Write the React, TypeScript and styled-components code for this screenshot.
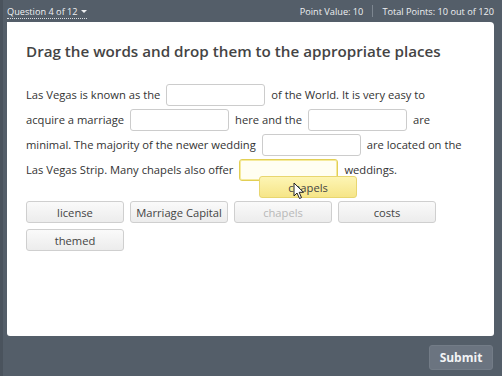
import React from "react";
import styled, { createGlobalStyle } from "styled-components";

const Global = createGlobalStyle`
  html, body { margin: 0; padding: 0; }
  body { background: #545e69; font-family: "Open Sans", "Liberation Sans", sans-serif; }
  * { box-sizing: border-box; }
`;

const Frame = styled.div`
  width: 502px;
  height: 376px;
  background: #545e69;
  border-left: 3px solid #4a535d;
  padding: 0 8px 0 4px;
  display: flex;
  flex-direction: column;
`;

const TopBar = styled.div`
  height: 22px;
  display: flex;
  align-items: center;
  justify-content: space-between;
  color: #eef0f2;
  font-size: 9.2px;
`;

const QuestionMenu = styled.span`
  display: inline-flex;
  align-items: center;
  gap: 3px;
  border-bottom: 1px dotted #d8dce0;
  line-height: 12px;
  margin-top: 2px;
`;

const Caret = styled.span`
  width: 0;
  height: 0;
  border-left: 3px solid transparent;
  border-right: 3px solid transparent;
  border-top: 3px solid #eef0f2;
`;

const Stats = styled.div`
  display: flex;
  align-items: center;
  gap: 9px;
`;

const Divider = styled.span`
  width: 1px;
  height: 12px;
  background: #7d8690;
`;

const Card = styled.div`
  position: relative;
  height: 314px;
  background: #ffffff;
  border-radius: 0 4px 3px 3px;
  padding: 17px 19px;
  color: #333;
`;

const Title = styled.h1`
  margin: 0 0 19px;
  font-size: 15.2px;
  font-weight: 600;
  line-height: 24px;
  color: #444;
  white-space: nowrap;
`;

const Passage = styled.div`
  font-size: 11.2px;
  color: #333;
`;

const Line = styled.div`
  display: flex;
  align-items: center;
  height: 25px;
  white-space: nowrap;
`;

const Blank = styled.span<{ $active?: boolean }>`
  display: inline-block;
  width: 99px;
  height: 22px;
  margin: 0 6px;
  border-radius: 3px;
  border: 1px solid ${(p) => (p.$active ? "#e2cf55" : "#cccccc")};
  box-shadow: ${(p) => (p.$active ? "inset 0 0 0 1px #f5ea9c" : "none")};
  background: ${(p) => (p.$active ? "#fffef2" : "#ffffff")};
`;

const Bank = styled.div`
  margin-top: 19px;
  display: grid;
  grid-template-columns: repeat(4, 98px);
  column-gap: 6px;
  row-gap: 6px;
`;

const Word = styled.div<{ $used?: boolean }>`
  height: 22px;
  border: 1px solid #cfcfcf;
  border-radius: 3px;
  background: linear-gradient(#fafafa, #ececec);
  display: flex;
  align-items: center;
  justify-content: center;
  font-size: 11.2px;
  color: ${(p) => (p.$used ? "#b8b8b8" : "#444")};
`;

const DragChip = styled.div`
  position: absolute;
  left: 252px;
  top: 154px;
  width: 98px;
  height: 22px;
  border: 1px solid #e8d670;
  border-radius: 3px;
  background: linear-gradient(#fdf5b4, #f6e588);
  display: flex;
  align-items: center;
  justify-content: center;
  font-size: 11.2px;
  color: #444;
`;

const Pointer = styled.svg`
  position: absolute;
  left: 286px;
  top: 160px;
`;

const Footer = styled.div`
  flex: 1;
  display: flex;
  justify-content: flex-end;
  align-items: flex-start;
  padding-top: 9px;
`;

const SubmitButton = styled.button`
  width: 64px;
  height: 25px;
  border: 1px solid #737c87;
  border-radius: 3px;
  background: #6b7480;
  color: #f2f3f5;
  font-family: "Open Sans", "Liberation Sans", sans-serif;
  font-size: 12px;
  font-weight: 700;
  margin-right: 1px;
`;

export default function App() {
  return (
    <>
      <Global />
      <Frame>
        <TopBar>
          <QuestionMenu>
            Question 4 of 12 <Caret />
          </QuestionMenu>
          <Stats>
            <span>Point Value: 10</span>
            <Divider />
            <span>Total Points: 10 out of 120</span>
          </Stats>
        </TopBar>
        <Card>
          <Title>Drag the words and drop them to the appropriate places</Title>
          <Passage>
            <Line>
              Las Vegas is known as the <Blank /> of the World. It is very easy to
            </Line>
            <Line>
              acquire a marriage <Blank /> here and the <Blank /> are
            </Line>
            <Line>
              minimal. The majority of the newer wedding <Blank /> are located on the
            </Line>
            <Line>
              Las Vegas Strip. Many chapels also offer <Blank $active /> weddings.
            </Line>
          </Passage>
          <Bank>
            <Word>license</Word>
            <Word>Marriage Capital</Word>
            <Word $used>chapels</Word>
            <Word>costs</Word>
            <Word>themed</Word>
          </Bank>
          <DragChip>chapels</DragChip>
          <Pointer width="12" height="18" viewBox="0 0 12 18">
            <path
              d="M1 1 L1 14 L4 11 L6.5 16.5 L8.5 15.6 L6.2 10.3 L10.5 10.3 Z"
              fill="#ffffff"
              stroke="#222"
              strokeWidth="1"
              strokeLinejoin="round"
            />
          </Pointer>
        </Card>
        <Footer>
          <SubmitButton>Submit</SubmitButton>
        </Footer>
      </Frame>
    </>
  );
}
